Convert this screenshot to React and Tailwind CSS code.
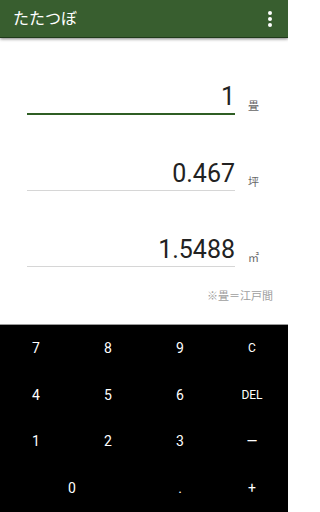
import React from "react";

const FONT = { fontFamily: 'Roboto, "Noto Sans CJK JP", sans-serif' };

const Field = ({ value, unit, active }) => (
  <div className="flex items-end pl-[27px]">
    <div className={`w-[208px] text-right text-[25px] leading-none text-[#222] pb-[4px] ${active ? "border-b-2 border-[#2f5e24]" : "border-b border-[#d6d6d6]"}`}>
      {value}
    </div>
    <span className="ml-[13px] mb-[3px] text-[11px] leading-none text-[#666]">{unit}</span>
  </div>
);

const keys = [
  ["7", "8", "9", "C"],
  ["4", "5", "6", "DEL"],
  ["1", "2", "3", "—"],
];

export default function App() {
  return (
    <div className="w-[288px] h-[512px] flex flex-col bg-white overflow-hidden" style={FONT}>
      <div className="h-[38px] bg-[#385e2f] flex items-center justify-between pl-[13px] pr-[16px] shadow-[0_1px_3px_rgba(0,0,0,0.5)] z-10 border-b border-[#1f3a1a]">
        <span className="text-white text-[16px]">たたつぼ</span>
        <div className="flex flex-col gap-[2px]">
          <span className="w-[4px] h-[4px] rounded-full bg-white" />
          <span className="w-[4px] h-[4px] rounded-full bg-white" />
          <span className="w-[4px] h-[4px] rounded-full bg-white" />
        </div>
      </div>
      <div className="flex-1 flex flex-col pt-[46px]">
        <Field value="1" unit="畳" active />
        <div className="h-[46px]" />
        <Field value="0.467" unit="坪" />
        <div className="h-[46px]" />
        <Field value="1.5488" unit="㎡" />
        <div className="text-right pr-[15px] pt-[22px] text-[11px] text-[#9e9e9e]">※畳＝江戸間</div>
      </div>
      <div className="h-[188px] bg-black border-t border-[#9a9a9a] grid grid-cols-4 grid-rows-4 text-white text-[14px]">
        {keys.flat().map((k) => (
          <div key={k} className={`flex items-center justify-center ${k === "C" || k === "DEL" ? "text-[12px]" : ""}`}>
            {k}
          </div>
        ))}
        <div className="col-span-2 flex items-center justify-center">0</div>
        <div className="flex items-center justify-center">.</div>
        <div className="flex items-center justify-center">+</div>
      </div>
    </div>
  );
}
